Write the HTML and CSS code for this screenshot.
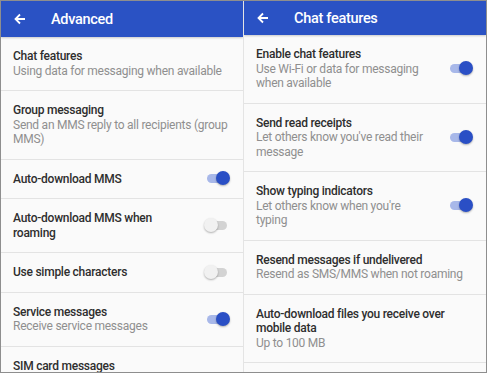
FILE: index.html
```html
<!DOCTYPE html>
<html lang="en">
<head>
  <meta charset="UTF-8">
  <title>Messages settings</title>
  <link rel="stylesheet" href="styles.css">
</head>
<body>
  <div class="frame">
    <div class="screen left">
      <div class="appbar tall">
        <svg class="back" width="12" height="12" viewBox="0 0 12 12"><path d="M11 6H2M6 1.5L1.5 6 6 10.5" fill="none" stroke="#fff" stroke-width="1.8"/></svg>
        <span class="title">Advanced</span>
      </div>
      <div class="row">
        <div class="text">
          <div class="label">Chat features</div>
          <div class="sub">Using data for messaging when available</div>
        </div>
      </div>
      <div class="row">
        <div class="text">
          <div class="label">Group messaging</div>
          <div class="sub">Send an MMS reply to all recipients (group MMS)</div>
        </div>
      </div>
      <div class="row">
        <div class="text narrow">
          <div class="label">Auto-download MMS</div>
        </div>
        <span class="switch on"></span>
      </div>
      <div class="row">
        <div class="text narrow">
          <div class="label">Auto-download MMS when roaming</div>
        </div>
        <span class="switch"></span>
      </div>
      <div class="row">
        <div class="text narrow">
          <div class="label">Use simple characters</div>
        </div>
        <span class="switch"></span>
      </div>
      <div class="row">
        <div class="text narrow">
          <div class="label">Service messages</div>
          <div class="sub">Receive service messages</div>
        </div>
        <span class="switch on"></span>
      </div>
      <div class="row">
        <div class="text">
          <div class="label">SIM card messages</div>
        </div>
      </div>
    </div>
    <div class="screen right">
      <div class="appbar">
        <svg class="back" width="12" height="12" viewBox="0 0 12 12"><path d="M11 6H2M6 1.5L1.5 6 6 10.5" fill="none" stroke="#fff" stroke-width="1.8"/></svg>
        <span class="title">Chat features</span>
      </div>
      <div class="row">
        <div class="text narrow">
          <div class="label">Enable chat features</div>
          <div class="sub">Use Wi-Fi or data for messaging when available</div>
        </div>
        <span class="switch on"></span>
      </div>
      <div class="row">
        <div class="text narrow">
          <div class="label">Send read receipts</div>
          <div class="sub">Let others know you've read their message</div>
        </div>
        <span class="switch on"></span>
      </div>
      <div class="row">
        <div class="text narrow">
          <div class="label">Show typing indicators</div>
          <div class="sub">Let others know when you're typing</div>
        </div>
        <span class="switch on"></span>
      </div>
      <div class="row">
        <div class="text">
          <div class="label">Resend messages if undelivered</div>
          <div class="sub">Resend as SMS/MMS when not roaming</div>
        </div>
      </div>
      <div class="row">
        <div class="text">
          <div class="label">Auto-download files you receive over mobile data</div>
          <div class="sub">Up to 100 MB</div>
        </div>
      </div>
      <div class="row"></div>
    </div>
  </div>
</body>
</html>
```

FILE: styles.css
```css
body { margin: 0; font-family: Roboto, sans-serif; background: #fff; }
.frame { width: 487px; height: 373px; box-sizing: border-box; border: 1px solid #8e8e8e; display: flex; gap: 1px; background: #e4e4e4; overflow: hidden; }
.screen { width: 242px; background: #fafafa; overflow: hidden; }
.appbar { height: 34px; background: #2a52c4; display: flex; align-items: center; padding-left: 13px; box-shadow: 0 1px 2px rgba(0,0,0,0.2); }
.appbar.tall { height: 36px; }
.back { flex: none; }
.title { color: #fff; font-size: 14.5px; font-weight: 500; margin-left: 25px; letter-spacing: -0.3px; }
.row { display: flex; align-items: center; padding: 12px 14px 12px 12px; border-bottom: 1px solid #e3e3e3; }
.text { flex: 1; font-size: 12px; line-height: 14.5px; letter-spacing: -0.25px; }
.text.narrow { padding-right: 22px; }
.label { color: #2e2e2e; font-weight: 500; }
.sub { color: #8f8f8f; }
.switch { flex: none; position: relative; width: 20px; height: 9px; border-radius: 5px; background: #d3d3d3; margin-right: 2px; }
.switch::after { content: ""; position: absolute; left: -3px; top: -3px; width: 14px; height: 14px; border-radius: 50%; background: #f1f1f1; box-shadow: 0 1px 2px rgba(0,0,0,0.3); }
.switch.on { background: #a8b8e9; }
.switch.on::after { left: auto; right: -3px; background: #2a4fc5; }
```
